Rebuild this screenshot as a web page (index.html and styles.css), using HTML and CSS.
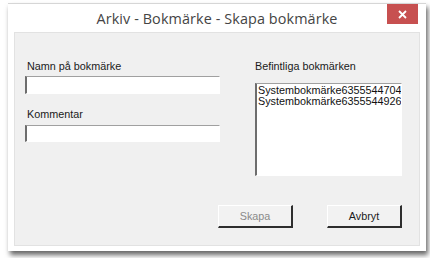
FILE: index.html
```html
<!DOCTYPE html>
<html lang="sv">
<head>
<meta charset="utf-8">
<title>Arkiv - Bokmärke - Skapa bokmärke</title>
<link rel="stylesheet" href="styles.css">
</head>
<body>
<div class="window">
  <div class="titlebar">
    <div class="title">Arkiv - Bokmärke - Skapa bokmärke</div>
    <button class="close" type="button" aria-label="Stäng">
      <svg width="9" height="9" viewBox="0 0 9 9"><path d="M1 1L8 8M8 1L1 8" stroke="#fff" stroke-width="1.8" fill="none"/></svg>
    </button>
  </div>
  <div class="client">
    <div class="columns">
      <div class="col-left">
        <div class="label">Namn på bokmärke</div>
        <div class="field field-name"></div>
        <div class="label label-comment">Kommentar</div>
        <div class="field field-comment"></div>
      </div>
      <div class="col-right">
        <div class="label">Befintliga bokmärken</div>
        <div class="listbox">
          <div class="item">Systembokmärke6355544704</div>
          <div class="item">Systembokmärke6355544926</div>
        </div>
      </div>
    </div>
    <div class="buttons">
      <button class="btn btn-disabled" type="button">Skapa</button>
      <button class="btn" type="button">Avbryt</button>
    </div>
  </div>
</div>
</body>
</html>
```

FILE: styles.css
```css
html, body {
  margin: 0;
  padding: 0;
  background: #ffffff;
}

body {
  width: 430px;
  height: 258px;
  overflow: hidden;
  padding-top: 3px;
  padding-left: 8px;
  box-sizing: border-box;
}

.window {
  width: 418px;
  height: 248px;
  box-sizing: border-box;
  background: #ffffff;
  border-top: 1px solid #d6d6d6;
  box-shadow: 2px 4px 5px rgba(0, 0, 0, 0.6);
  display: flex;
  flex-direction: column;
}

.titlebar {
  height: 28px;
  display: grid;
  grid-template-columns: 1fr auto 1fr;
  align-items: start;
}

.title {
  grid-column: 2;
  font-family: "Open Sans", "Noto Sans", sans-serif;
  font-size: 14.4px;
  line-height: 29px;
  color: #444444;
  white-space: nowrap;
  letter-spacing: 0.1px;
}

.close {
  grid-column: 3;
  justify-self: end;
  margin-right: 8px;
  width: 31px;
  height: 20px;
  padding: 0;
  border: 0;
  background: #c75050;
  display: flex;
  align-items: center;
  justify-content: center;
}

.client {
  flex: 1;
  margin: 0 6px 5px 6px;
  background: #f0f0f0;
  border: 1px solid #e2e2e2;
  padding: 27px 17px 0 10px;
  font-family: "Liberation Sans", Arial, sans-serif;
  font-size: 10.8px;
  line-height: 13px;
  color: #1a1a1a;
}

.columns {
  display: flex;
  gap: 35px;
}

.col-left {
  width: 195px;
  display: flex;
  flex-direction: column;
}

.col-right {
  width: 147px;
  display: flex;
  flex-direction: column;
}

.label {
  padding-left: 2px;
  white-space: nowrap;
}

.col-right .label {
  padding-left: 0;
}

.field {
  box-sizing: border-box;
  background: #ffffff;
  border-style: solid;
  border-width: 1px 1px 1px 2px;
  border-color: #a0a0a0 #ffffff #ffffff #6d6d6d;
}

.field-name {
  margin-top: 3px;
  height: 18px;
}

.label-comment {
  margin-top: 14px;
}

.field-comment {
  margin-top: 4px;
  height: 17px;
}

.listbox {
  margin-top: 10px;
  height: 93px;
  box-sizing: border-box;
  background: #ffffff;
  border-style: solid;
  border-width: 1px 1px 1px 2px;
  border-color: #a0a0a0 #ffffff #ffffff #6d6d6d;
  padding: 1px 0 0 1px;
  overflow: hidden;
}

.item {
  line-height: 11px;
  white-space: nowrap;
  color: #111;
}

.buttons {
  margin-top: 29px;
  display: flex;
  justify-content: flex-end;
  gap: 34px;
}

.btn {
  width: 75px;
  height: 23px;
  box-sizing: border-box;
  padding: 0;
  margin: 0;
  font-family: "Liberation Sans", Arial, sans-serif;
  font-size: 10.8px;
  color: #1a1a1a;
  background: #f2f2f2;
  border-style: solid;
  border-width: 1px 2px 2px 1px;
  border-color: #ffffff #2e2e2e #2e2e2e #ffffff;
}

.btn-disabled {
  color: #8a8a8a;
}
```
